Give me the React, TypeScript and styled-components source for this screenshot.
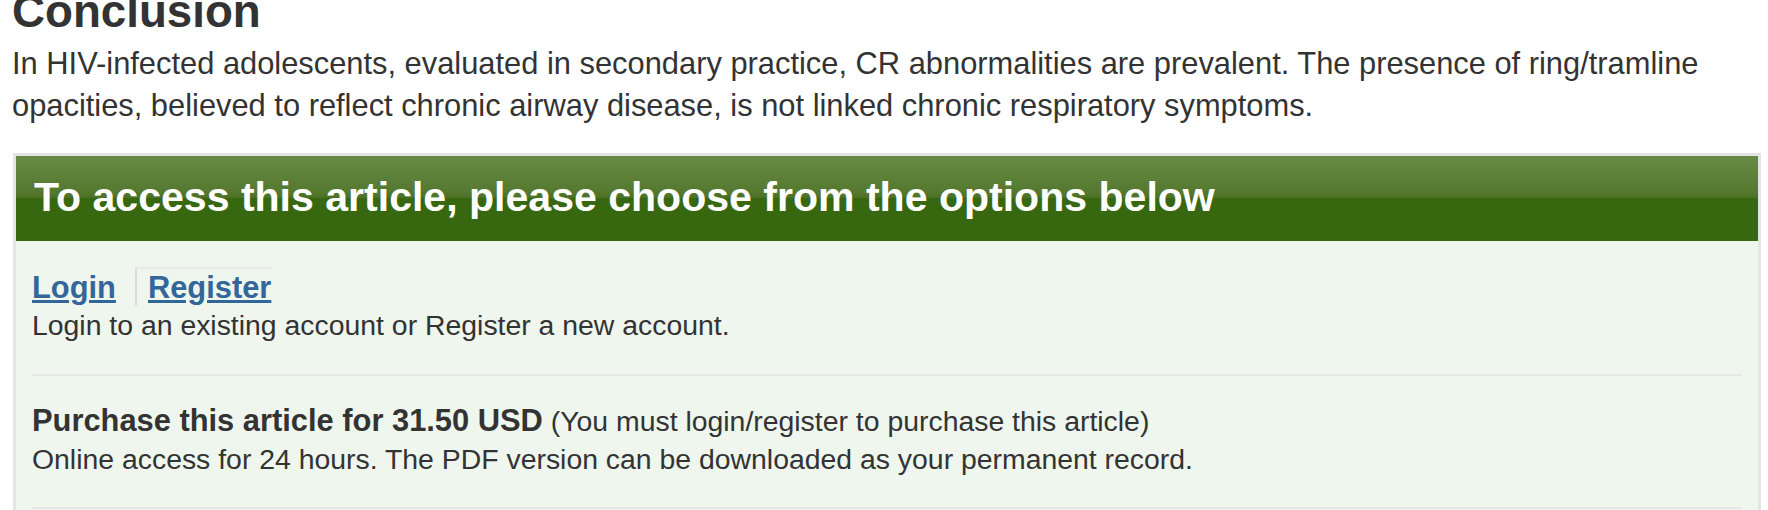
import styled, { createGlobalStyle } from "styled-components";

const GlobalStyle = createGlobalStyle`
  html, body {
    margin: 0;
    padding: 0;
    background: #fff;
    overflow: hidden;
  }
  body {
    font-family: "Liberation Sans", Arial, Helvetica, sans-serif;
    color: #333;
  }
`;

export default function App() {
  return (
    <>
      <GlobalStyle />
      <Page>
        <Heading>Conclusion</Heading>
        <Abstract>
          In HIV-infected adolescents, evaluated in secondary practice, CR
          abnormalities are prevalent. The presence of ring/tramline opacities,
          believed to reflect chronic airway disease, is not linked chronic
          respiratory symptoms.
        </Abstract>
        <AccessBox>
          <AccessTitle>To access this article, please choose from the options below</AccessTitle>
          <Options>
            <Option>
              <LinkRow>
                <LinkItem>
                  <StyledLink href="#">Login</StyledLink>
                </LinkItem>
                <LinkItem $divided>
                  <StyledLink href="#">Register</StyledLink>
                </LinkItem>
              </LinkRow>
              <Note>Login to an existing account or Register a new account.</Note>
            </Option>
            <Option $last>
              <Note>
                <strong>Purchase this article for 31.50 USD</strong> (You must
                login/register to purchase this article)
              </Note>
              <Note>
                Online access for 24 hours. The PDF version can be downloaded as
                your permanent record.
              </Note>
            </Option>
          </Options>
        </AccessBox>
      </Page>
    </>
  );
}

const Page = styled.div`
  padding: 0 7px 0 12px;
  font-size: 30.85px;
`;

const Heading = styled.h2`
  margin: -13px 0 0;
  font-size: 45.7px;
  line-height: 50px;
  font-weight: bold;
  color: #333;
`;

const Abstract = styled.p`
  margin: 6px 0 26px;
  line-height: 42px;
  color: #333;
`;

const AccessBox = styled.div`
  margin-left: 1px;
  border: 3px solid #e4e4e4;
  background: #eff6ee;
`;

const AccessTitle = styled.h3`
  margin: 0;
  padding: 0 18px 2px;
  height: 85px;
  box-sizing: border-box;
  line-height: 83px;
  font-size: 41.05px;
  font-weight: bold;
  color: #fff;
  background: linear-gradient(
    to bottom,
    #688b47 0%,
    #55792f 42%,
    #4a7026 49%,
    #37670f 50%,
    #37670f 100%
  );
`;

const Options = styled.div`
  padding: 0 16px 60px;
`;

const Option = styled.div<{ $last?: boolean }>`
  padding: 26px 0 ${(p) => (p.$last ? "28px" : "29px")};
  border-bottom: 2px solid #e6e8e5;
`;

const LinkRow = styled.div`
  display: flex;
  align-items: flex-start;
`;

const LinkItem = styled.div<{ $divided?: boolean }>`
  line-height: 37px;
  padding-top: ${(p) => (p.$divided ? "0" : "2px")};
  padding-right: ${(p) => (p.$divided ? "0" : "19px")};
  padding-left: ${(p) => (p.$divided ? "11px" : "0")};
  border-left: ${(p) => (p.$divided ? "2px solid #dcdcdc" : "none")};
  border-top: ${(p) => (p.$divided ? "2px solid #e8e8e8" : "none")};
`;

const StyledLink = styled.a`
  font-weight: bold;
  color: #336699;
  text-decoration: underline;
`;

const Note = styled.div`
  font-size: 28.4px;
  line-height: 38.6px;
  color: #333;

  strong {
    font-size: 30.85px;
    font-weight: bold;
  }
`;
